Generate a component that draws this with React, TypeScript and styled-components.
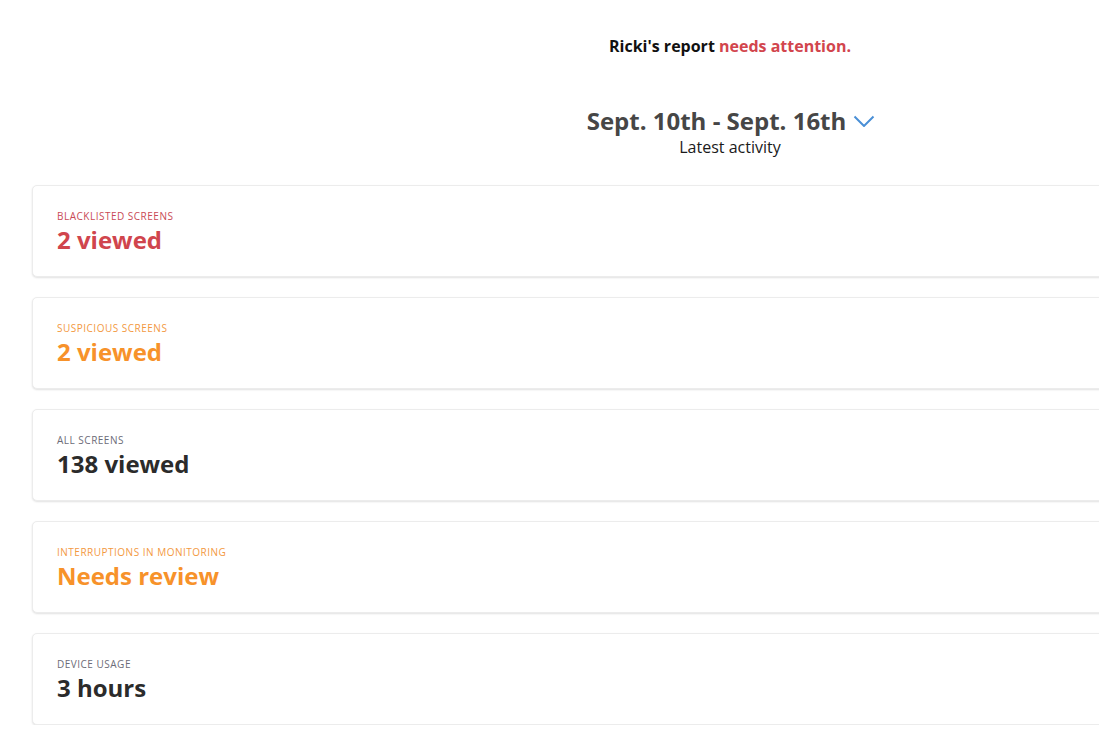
import React from "react"
import styled, { createGlobalStyle } from "styled-components"

const GlobalStyle = createGlobalStyle`
  html, body {
    margin: 0;
    padding: 0;
    overflow: hidden;
    background: #ffffff;
    font-family: "Open Sans", "Liberation Sans", sans-serif;
  }
`

const Page = styled.main`
  width: 1396px;
  margin-left: 32px;
  padding-top: 34px;
`

const Header = styled.header`
  display: flex;
  flex-direction: column;
  align-items: center;
  margin-bottom: 27px;
`

const Status = styled.h1`
  margin: 0 0 48px;
  font-size: 16px;
  font-weight: 700;
  color: #111111;
  line-height: 24px;
`

const Alert = styled.span`
  color: #d2454d;
`

const RangeButton = styled.button`
  display: flex;
  align-items: center;
  gap: 7px;
  padding: 0;
  margin-left: 2px;
  border: none;
  background: none;
  font-family: inherit;
  font-size: 24px;
  font-weight: 700;
  color: #464646;
  line-height: 30px;
  cursor: pointer;
`

const Subtitle = styled.div`
  font-size: 16px;
  color: #1a1a1a;
  line-height: 22px;
`

const CardList = styled.section`
  display: flex;
  flex-direction: column;
  gap: 20px;
`

const Card = styled.article`
  box-sizing: border-box;
  height: 92px;
  padding: 23px 24px;
  border: 1px solid #ececec;
  border-radius: 5px;
  background: #ffffff;
  box-shadow: 0 1px 2px rgba(0, 0, 0, 0.12);
`

type Tone = "alert" | "warn" | "neutral"

const labelColors: Record<Tone, string> = {
  alert: "#c94a55",
  warn: "#f3993f",
  neutral: "#6c6c78",
}

const valueColors: Record<Tone, string> = {
  alert: "#d0454d",
  warn: "#f7922a",
  neutral: "#2b2b2b",
}

const Label = styled.div<{ $tone: Tone }>`
  font-size: 10px;
  letter-spacing: 0.5px;
  text-transform: uppercase;
  color: ${(p) => labelColors[p.$tone]};
  line-height: 14px;
  margin-bottom: 2px;
`

const Value = styled.div<{ $tone: Tone }>`
  font-size: 24px;
  font-weight: 700;
  color: ${(p) => valueColors[p.$tone]};
  line-height: 30px;
`

const Chevron = () => (
  <svg width="22" height="12" viewBox="0 0 22 12" fill="none">
    <path d="M1.5 1.5l9.5 9.5 9.5-9.5" stroke="#4a8fd6" strokeWidth="2" />
  </svg>
)

const stats: { label: string; value: string; tone: Tone }[] = [
  { label: "Blacklisted screens", value: "2 viewed", tone: "alert" },
  { label: "Suspicious screens", value: "2 viewed", tone: "warn" },
  { label: "All screens", value: "138 viewed", tone: "neutral" },
  { label: "Interruptions in monitoring", value: "Needs review", tone: "warn" },
  { label: "Device usage", value: "3 hours", tone: "neutral" },
]

export default function App() {
  return (
    <>
      <GlobalStyle />
      <Page>
        <Header>
          <Status>
            Ricki's report <Alert>needs attention.</Alert>
          </Status>
          <RangeButton>
            Sept. 10th - Sept. 16th
            <Chevron />
          </RangeButton>
          <Subtitle>Latest activity</Subtitle>
        </Header>
        <CardList>
          {stats.map((s) => (
            <Card key={s.label}>
              <Label $tone={s.tone}>{s.label}</Label>
              <Value $tone={s.tone}>{s.value}</Value>
            </Card>
          ))}
        </CardList>
      </Page>
    </>
  )
}
